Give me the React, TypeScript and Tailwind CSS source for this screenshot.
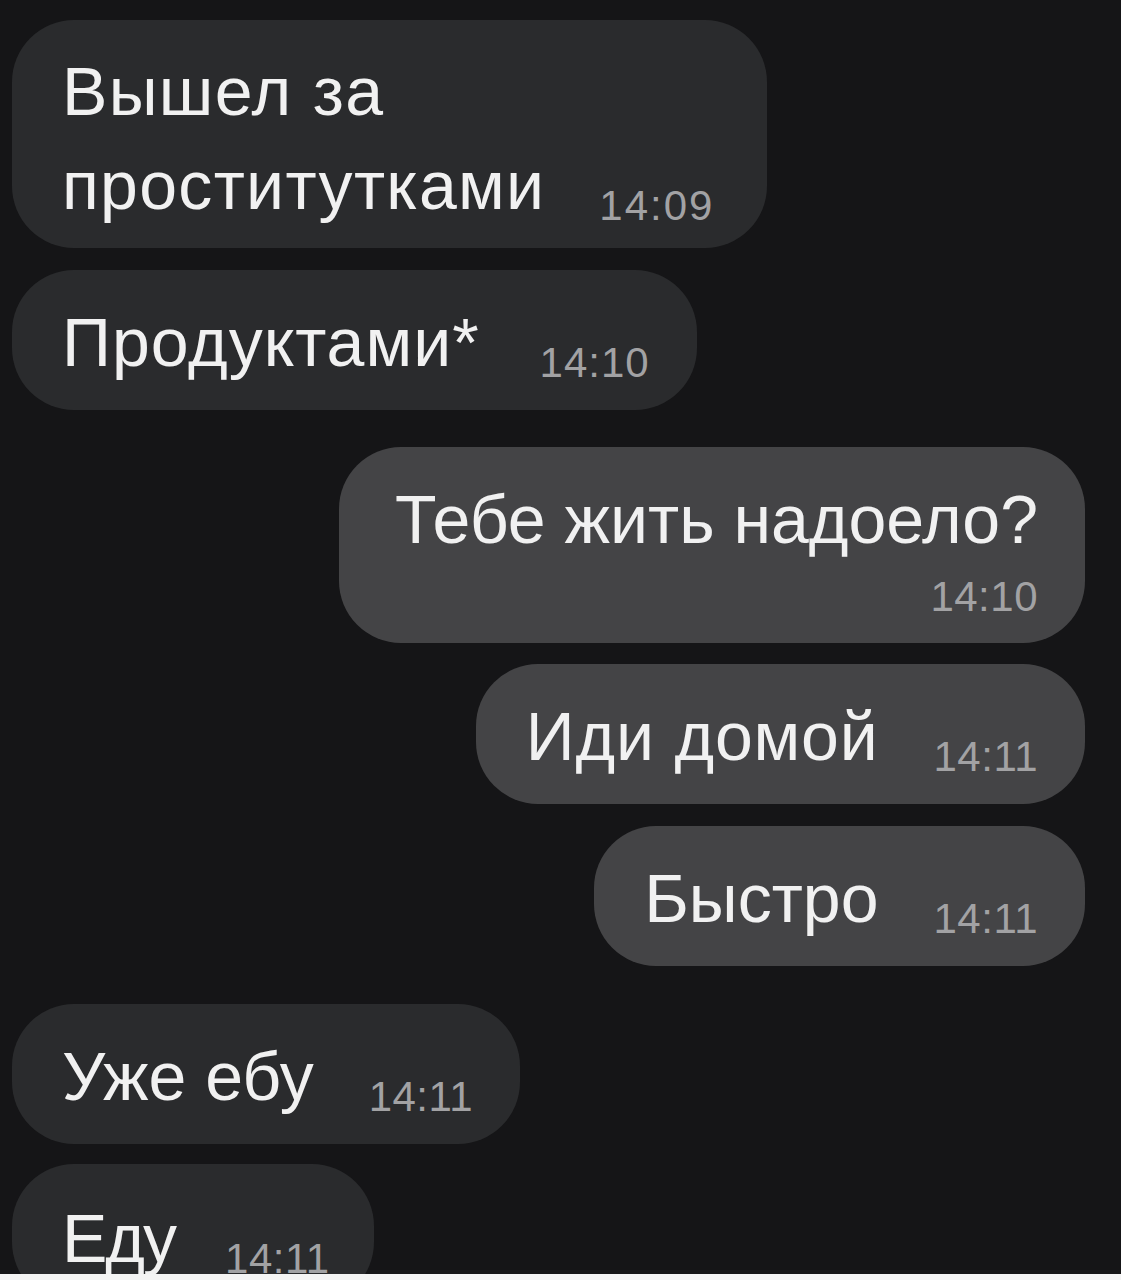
import React from "react";

type Msg = {
	text: React.ReactNode;
	time: string;
	out?: boolean;
	stacked?: boolean;
	gapTop: string;
	pad?: string;
	textCls?: string;
	timeCls?: string;
};

const messages: Msg[] = [
	{
		text: <>Вышел за<br />проститутками</>,
		time: "14:09",
		gapTop: "mt-[20px]",
		pad: "pt-[24px] pb-[16px] pr-[53px]",
		textCls: "tracking-[1.3px]",
		timeCls: "ml-[54px] tracking-[2px]",
	},
	{
		text: "Продуктами*",
		time: "14:10",
		gapTop: "mt-[22px]",
		textCls: "tracking-[1px]",
		timeCls: "ml-[60px] tracking-[1px]",
	},
	{ text: "Тебе жить надоело?", time: "14:10", out: true, stacked: true, gapTop: "mt-[37px]" },
	{ text: "Иди домой", time: "14:11", out: true, gapTop: "mt-[21px]", textCls: "tracking-[0.8px]" },
	{ text: "Быстро", time: "14:11", out: true, gapTop: "mt-[22px]" },
	{ text: "Уже ебу", time: "14:11", gapTop: "mt-[38px]" },
	{
		text: "Еду",
		time: "14:11",
		gapTop: "mt-[20px]",
		textCls: "tracking-[-2px]",
		timeCls: "ml-[50px] tracking-[0.5px]",
		pad: "pt-[27px] pb-[19px] pr-[44px]",
	},
];

function Bubble({ m }: { m: Msg }) {
	const bg = m.out ? "bg-[#444446]" : "bg-[#2a2b2d]";
	const side = m.out ? "self-end" : "self-start";

	if (m.stacked) {
		return (
			<div className={`${side} ${m.gapTop} ${bg} rounded-[62px] pl-[56px] pr-[47px] pt-[25px] pb-[20px] flex flex-col items-end`}>
				<div className="text-[68px] leading-[94px] text-[#f1f1f1]">{m.text}</div>
				<div className="mt-[4px] text-[42px] leading-[53px] tracking-[0.5px] text-[#a2a2a4]">{m.time}</div>
			</div>
		);
	}

	return (
		<div className={`${side} ${m.gapTop} ${bg} rounded-[62px] pl-[50px] ${m.pad ?? "pt-[25px] pb-[21px] pr-[47px]"} flex items-end`}>
			<div className={`text-[68px] leading-[94px] text-[#f1f1f1] ${m.textCls ?? ""}`}>{m.text}</div>
			<div className={`text-[42px] leading-[53px] text-[#a2a2a4] ${m.timeCls ?? "ml-[55px] tracking-[0.5px]"}`}>{m.time}</div>
		</div>
	);
}

export default function App() {
	return (
		<div
			className="w-[1121px] h-[1280px] overflow-hidden bg-[#151517] flex flex-col"
			style={{ fontFamily: '"Liberation Sans", Arial, sans-serif' }}
		>
			<div className="flex-1 overflow-hidden flex flex-col pl-[12px] pr-[36px]">
				{messages.map((m, i) => (
					<Bubble key={i} m={m} />
				))}
			</div>
			<div className="h-[6px] bg-[#f4f4f4]" />
		</div>
	);
}
